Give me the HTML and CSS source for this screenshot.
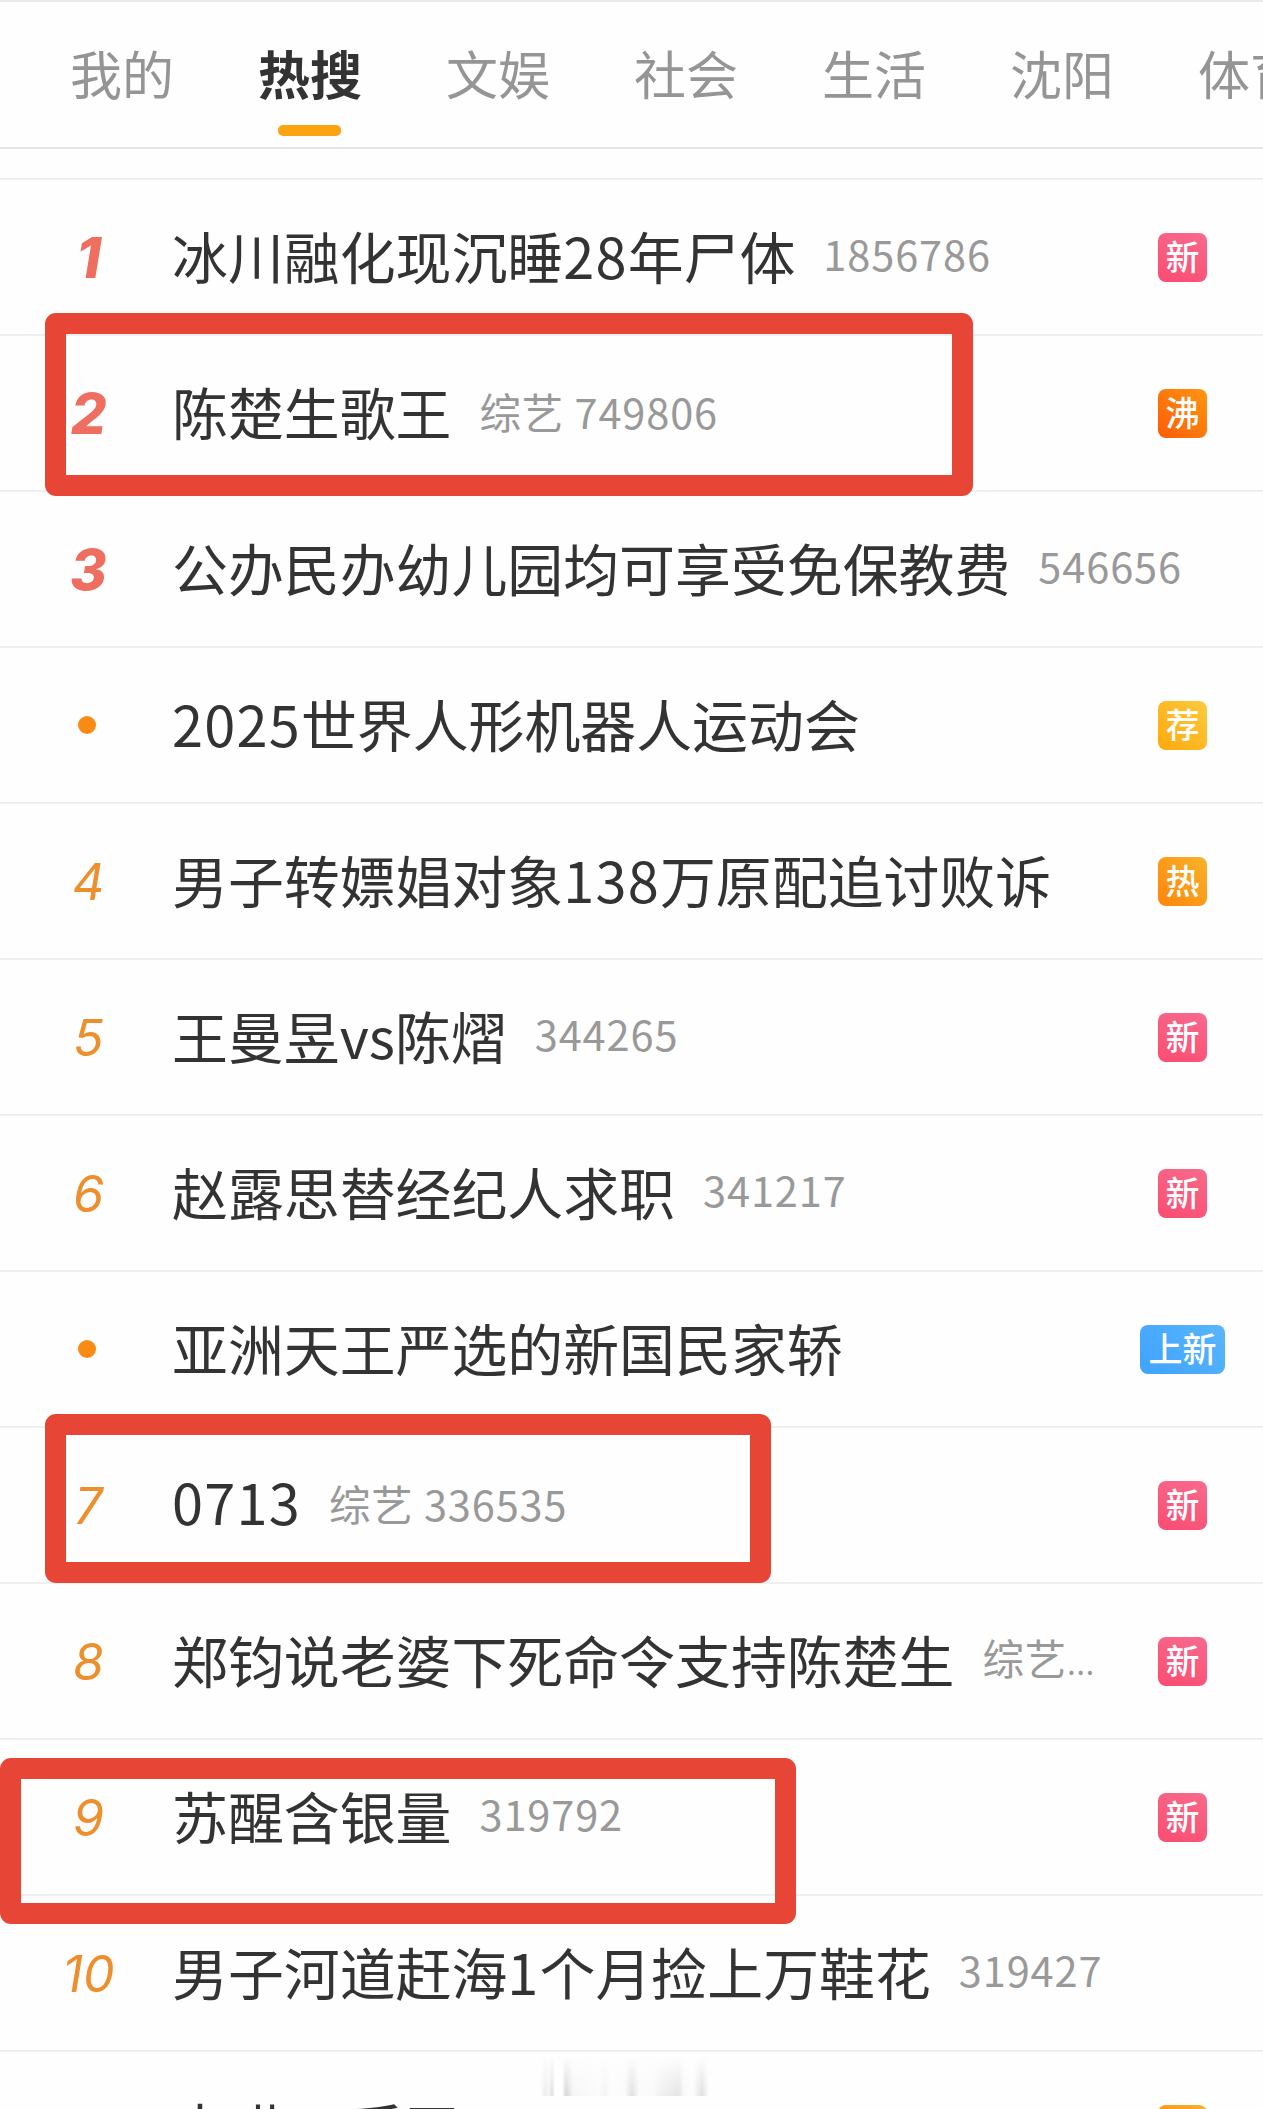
FILE: index.html
```html
<!DOCTYPE html>
<html lang="zh-CN">
<head>
  <meta charset="UTF-8">
  <title>热搜</title>
  <link rel="stylesheet" href="styles.css">
</head>
<body>
<div class="page">
  <nav class="tabs">
    <a class="tab">我的</a>
    <a class="tab active">热搜</a>
    <a class="tab">文娱</a>
    <a class="tab">社会</a>
    <a class="tab">生活</a>
    <a class="tab">沈阳</a>
    <a class="tab">体育</a>
  </nav>

  <ul class="list">
    <li class="row">
      <span class="rank top">1</span>
      <span class="title">冰川融化现沉睡<b>28</b>年尸体</span>
      <span class="meta num">1856786</span>
      <span class="badge new">新</span>
    </li>
    <li class="row">
      <span class="rank top">2</span>
      <span class="title">陈楚生歌王</span>
      <span class="meta">综艺 749806</span>
      <span class="badge boil">沸</span>
      <div class="mark mark-a"></div>
    </li>
    <li class="row">
      <span class="rank top">3</span>
      <span class="title">公办民办幼儿园均可享受免保教费</span>
      <span class="meta num">546656</span>
    </li>
    <li class="row">
      <span class="rank"><i class="dot"></i></span>
      <span class="title"><b>2025</b>世界人形机器人运动会</span>
      <span class="badge rec">荐</span>
    </li>
    <li class="row">
      <span class="rank">4</span>
      <span class="title">男子转嫖娼对象<b>138</b>万原配追讨败诉</span>
      <span class="badge hot">热</span>
    </li>
    <li class="row">
      <span class="rank">5</span>
      <span class="title">王曼昱vs陈熠</span>
      <span class="meta num">344265</span>
      <span class="badge new">新</span>
    </li>
    <li class="row">
      <span class="rank">6</span>
      <span class="title">赵露思替经纪人求职</span>
      <span class="meta num">341217</span>
      <span class="badge new">新</span>
    </li>
    <li class="row">
      <span class="rank"><i class="dot"></i></span>
      <span class="title">亚洲天王严选的新国民家轿</span>
      <span class="badge fresh">上新</span>
    </li>
    <li class="row">
      <span class="rank">7</span>
      <span class="title num"><b>0713</b></span>
      <span class="meta">综艺 336535</span>
      <span class="badge new">新</span>
      <div class="mark mark-b"></div>
    </li>
    <li class="row">
      <span class="rank">8</span>
      <span class="title">郑钧说老婆下死命令支持陈楚生</span>
      <span class="meta">综艺<span class="more">...</span></span>
      <span class="badge new">新</span>
    </li>
    <li class="row">
      <span class="rank">9</span>
      <span class="title">苏醒含银量</span>
      <span class="meta num">319792</span>
      <span class="badge new">新</span>
      <div class="mark mark-c"></div>
    </li>
    <li class="row">
      <span class="rank">10</span>
      <span class="title">男子河道赶海<b>1</b>个月捡上万鞋花</span>
      <span class="meta num">319427</span>
    </li>
    <li class="row">
      <span class="rank"></span>
      <span class="title">大哄<b>00</b>后王</span>
      <span class="badge hot">热</span>
      <div class="smudge"></div>
    </li>
  </ul>
</div>
</body>
</html>
```

FILE: styles.css
```css
* {
  box-sizing: border-box;
  margin: 0;
  padding: 0;
}

body {
  font-family: "Noto Sans CJK SC", sans-serif;
  background: #fefefe;
  color: #333;
}

.page {
  width: 1263px;
  height: 2109px;
  overflow: hidden;
  border-top: 2px solid #ececec;
}

/* top tabs */
.tabs {
  display: flex;
  gap: 84px;
  height: 147px;
  padding: 31px 0 0 70px;
  border-bottom: 2px solid #e4e4e4;
  overflow: hidden;
}

.tab {
  display: flex;
  flex: none;
  flex-direction: column;
  align-items: center;
  width: 104px;
  font-size: 52px;
  line-height: 80px;
  color: #959595;
  white-space: nowrap;
}

.tab.active {
  color: #333;
  font-weight: bold;
}

.tab.active::after {
  content: "";
  width: 63px;
  height: 11px;
  margin: 12px 2px 0 0;
  border-radius: 5px;
  background: #faa411;
}

/* list */
.list {
  list-style: none;
  margin-top: 29px;
  border-top: 2px solid #efefef;
}

.row {
  position: relative;
  display: flex;
  align-items: center;
  height: 156px;
  padding-right: 56px;
  border-bottom: 2px solid #efefef;
}

.rank {
  display: flex;
  justify-content: center;
  flex: none;
  width: 172px;
  padding: 2px 0 0 5px;
  font-family: Inter, sans-serif;
  font-size: 50px;
  font-style: italic;
  line-height: 60px;
  color: #ee8f2e;
}

.rank.top {
  font-size: 56px;
  font-weight: 800;
  color: #ee6e60;
}

.dot {
  width: 18px;
  height: 18px;
  margin: 0 3px 2px 0;
  border-radius: 50%;
  background: #f98b14;
}

.title {
  flex: none;
  padding-bottom: 4px;
  font-size: 55.9px;
  line-height: 80px;
  white-space: nowrap;
}

.title b {
  font-weight: normal;
  letter-spacing: 1.2px;
}

.meta {
  flex: none;
  margin-left: 28px;
  padding-bottom: 4px;
  font-size: 41.5px;
  line-height: 60px;
  letter-spacing: 0.9px;
  color: #999;
  white-space: nowrap;
}

.num {
  padding-bottom: 8px;
}

.more {
  font-size: 30px;
}

.badge {
  flex: none;
  width: 49px;
  height: 49px;
  margin-left: auto;
  border-radius: 8px;
  font-size: 34px;
  font-weight: 500;
  line-height: 46px;
  text-align: center;
  color: #fff;
}

.new {
  background: linear-gradient(20deg, #fb4c72, #f76a8c);
}

.boil {
  background: linear-gradient(45deg, #fb5c06, #ff9612);
}

.rec {
  background: linear-gradient(45deg, #ffa80c, #fbcb3e);
}

.hot {
  background: linear-gradient(45deg, #ff8508, #f7b32c);
}

.fresh {
  width: 85px;
  margin-right: -18px;
  background: linear-gradient(45deg, #3fa3ff, #58b6fb);
}

/* hand-drawn red frames over the rows */
.mark {
  position: absolute;
  border: 21px solid #e74637;
  border-radius: 11px;
}

.mark-a {
  left: 45px;
  top: -23px;
  width: 928px;
  height: 183px;
}

.mark-b {
  left: 45px;
  top: -14px;
  width: 726px;
  height: 169px;
}

.mark-c {
  left: 0;
  top: 18px;
  width: 796px;
  height: 166px;
}

.smudge {
  position: absolute;
  left: 541px;
  top: 4px;
  width: 170px;
  height: 40px;
  background:
    linear-gradient(#fefefe, rgba(254, 254, 254, 0)),
    linear-gradient(90deg, #fafafa 0, #ededed 4px, #f4f4f4 8px, #dedede 11px, #fff 14px, #fff 21px, #d6d6d6 25px, #f6f6f6 32px, #fbfbfb 58px, #f4f4f4 64px, #fdfdfd 70px, #fafafa 84px, #dfdfdf 91px, #fafafa 98px, #fafafa 112px, #f0f0f0 120px, #e4e4e4 138px, #fafafa 143px, #fcfcfc 152px, #e0e0e0 161px, #fefefe 168px);
}
```
